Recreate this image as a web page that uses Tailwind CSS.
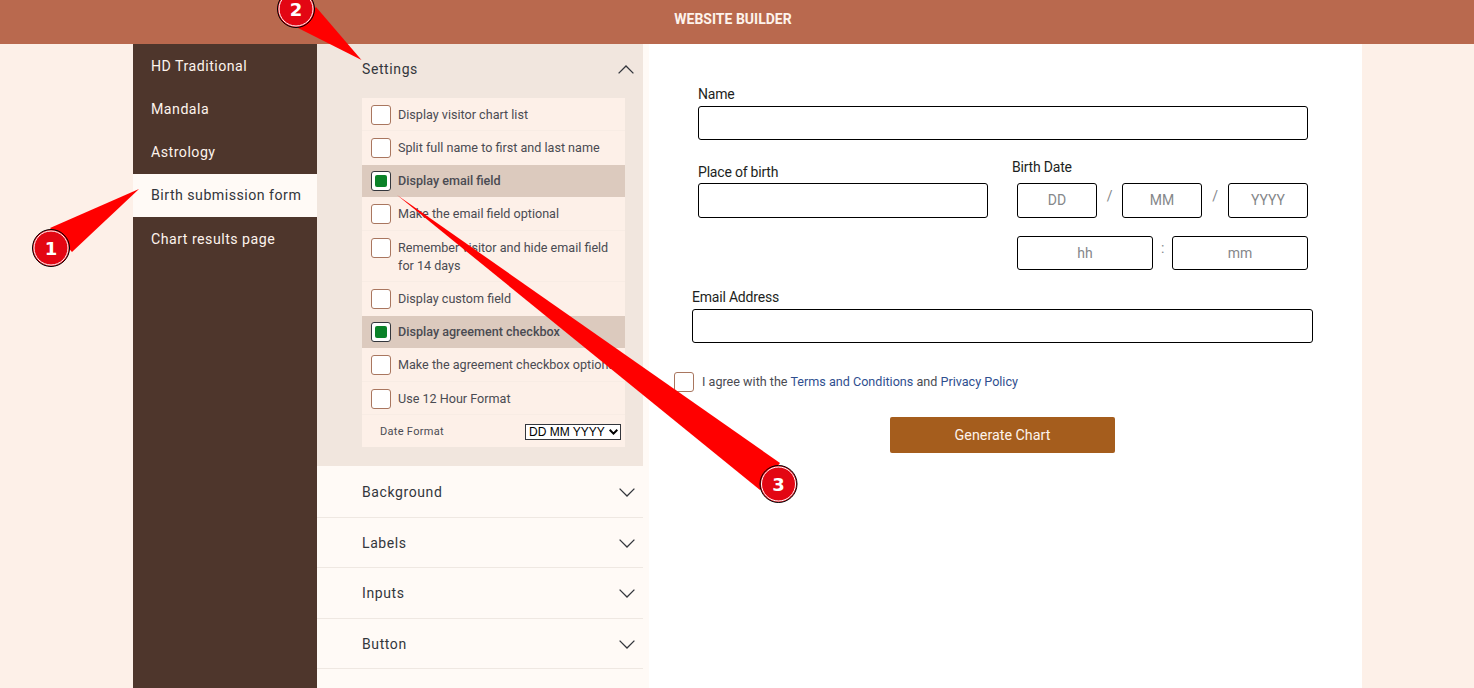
<!DOCTYPE html>
<html><head><meta charset="utf-8"><script src="https://cdn.jsdelivr.net/npm/@tailwindcss/browser@4"></script></head>
<body class="relative h-[688px] w-[1474px] overflow-hidden bg-[#fdf0e8] font-['Roboto',sans-serif] text-[#33363c]">
<header class="flex h-[44px] items-center justify-center bg-[#b9694e] pb-[6px] text-[14px] font-bold text-[#fdf3ec]"><span class="mr-[8px]">WEBSITE BUILDER</span></header>
<div class="ml-[133px] flex h-[644px] w-[1229px]">
  <nav class="flex w-[184px] shrink-0 flex-col bg-[#4e362c] text-[14.2px] font-normal tracking-[0.48px] text-[#fdf3ec]">
    <a class="flex h-[43.4px] items-center pt-[2px] pl-[18px]">HD Traditional</a>
    <a class="flex h-[43.3px] items-center pt-[1px] pl-[18px]">Mandala</a>
    <a class="flex h-[43.3px] items-center pt-[1px] pl-[18px]">Astrology</a>
    <a class="flex h-[43px] items-center pt-[1px] pl-[18px] bg-[#fffaf6] text-[#33363c]">Birth submission form</a>
    <a class="flex h-[44px] items-center pt-[1px] pl-[18px]">Chart results page</a>
  </nav>
  <aside class="w-[332px] shrink-0 bg-[#fffaf6]">
    <section class="h-[422px] w-[326px] bg-[#f1e6de] pl-[45px]">
      <div class="flex h-[54px] w-[273px] items-center justify-between pb-[4px] pr-[1px] text-[14px] tracking-[0.6px]">
        <span>Settings</span>
        <svg width="16" height="9" viewBox="0 0 16 9" fill="none" stroke="#33363c" stroke-width="1.3"><path d="M.6 8.4 8 1l7.4 7.4"/></svg>
      </div>
      <ul class="w-[263px] bg-[#fdf0e8] text-[12.6px] leading-[18px] text-[#4a4b52]">
        <li class="flex h-[33px] items-center gap-[7px] border-b border-[#f8ece4] pl-[9px] pt-[1px]"><span class="size-[20px] shrink-0 rounded-[3px] border border-[#a9765f] bg-white"></span>Display visitor chart list</li>
        <li class="flex h-[34px] items-center gap-[7px] pl-[9px]"><span class="size-[20px] shrink-0 rounded-[3px] border border-[#a9765f] bg-white"></span>Split full name to first and last name</li>
        <li class="flex h-[32px] items-center gap-[7px] bg-[#dccabe] pl-[9px] font-medium"><span class="flex size-[20px] shrink-0 items-center justify-center rounded-[3px] border border-[#33363c] bg-white"><span class="size-[12px] rounded-[2px] bg-[#0a8228]"></span></span>Display email field</li>
        <li class="flex h-[34px] items-center gap-[7px] border-b border-[#f8ece4] pl-[9px]"><span class="size-[20px] shrink-0 rounded-[3px] border border-[#a9765f] bg-white"></span>Make the email field optional</li>
        <li class="flex h-[51px] items-start gap-[7px] border-b border-[#f8ece4] pl-[9px] pt-[7px]"><span class="size-[20px] shrink-0 rounded-[3px] border border-[#a9765f] bg-white"></span><span class="mt-[1px] w-[228px]">Remember visitor and hide email field for 14 days</span></li>
        <li class="flex h-[34px] items-center gap-[7px] pl-[9px]"><span class="size-[20px] shrink-0 rounded-[3px] border border-[#a9765f] bg-white"></span>Display custom field</li>
        <li class="flex h-[32px] items-center gap-[7px] bg-[#dccabe] pl-[9px] font-medium"><span class="flex size-[20px] shrink-0 items-center justify-center rounded-[3px] border border-[#33363c] bg-white"><span class="size-[12px] rounded-[2px] bg-[#0a8228]"></span></span>Display agreement checkbox</li>
        <li class="flex h-[34px] items-center gap-[7px] whitespace-nowrap border-b border-[#f8ece4] pl-[9px] pt-[1px]"><span class="size-[20px] shrink-0 rounded-[3px] border border-[#a9765f] bg-white"></span>Make the agreement checkbox optional</li>
        <li class="flex h-[33px] items-center gap-[7px] border-b border-[#f8ece4] pl-[9px] pt-[1px]"><span class="size-[20px] shrink-0 rounded-[3px] border border-[#a9765f] bg-white"></span>Use 12 Hour Format</li>
        <li class="flex h-[32px] items-center justify-between pl-[18px] pr-[4px] pt-[1px] text-[11px] tracking-[0.3px]"><span>Date Format</span>
          <span class="relative block h-[16px] w-[96px]">
            <select class="block h-[16px] w-[96px] appearance-none border border-[#33363c] bg-white pl-[3px] font-['Liberation_Sans',sans-serif] text-[12px] leading-[14px] tracking-normal text-black"><option>DD MM YYYY</option></select>
            <svg class="absolute right-[3px] top-[5px]" width="9" height="6" viewBox="0 0 9 6" fill="none" stroke="#000" stroke-width="2"><path d="M.7.8 4.5 4.6 8.3.8"/></svg>
          </span></li>
      </ul>
    </section>
    <div class="flex h-[52px] w-[326px] items-center justify-between border-b border-[#efe8e2] pl-[45px] pr-[8px] pt-[1px] text-[14px] tracking-[0.6px]"><span>Background</span><svg width="16" height="9" viewBox="0 0 16 9" fill="none" stroke="#33363c" stroke-width="1.3"><path d="M.6.6 8 8l7.4-7.4"/></svg></div>
    <div class="flex h-[50px] w-[326px] items-center justify-between border-b border-[#efe8e2] pl-[45px] pr-[8px] pt-[1px] text-[14px] tracking-[0.6px]"><span>Labels</span><svg width="16" height="9" viewBox="0 0 16 9" fill="none" stroke="#33363c" stroke-width="1.3"><path d="M.6.6 8 8l7.4-7.4"/></svg></div>
    <div class="flex h-[51px] w-[326px] items-center justify-between border-b border-[#efe8e2] pl-[45px] pr-[8px] text-[14px] tracking-[0.6px]"><span>Inputs</span><svg width="16" height="9" viewBox="0 0 16 9" fill="none" stroke="#33363c" stroke-width="1.3"><path d="M.6.6 8 8l7.4-7.4"/></svg></div>
    <div class="flex h-[50px] w-[326px] items-center justify-between border-b border-[#efe8e2] pl-[45px] pr-[8px] pt-[1px] text-[14px] tracking-[0.6px]"><span>Button</span><svg width="16" height="9" viewBox="0 0 16 9" fill="none" stroke="#33363c" stroke-width="1.3"><path d="M.6.6 8 8l7.4-7.4"/></svg></div>
  </aside>
  <main class="flex-1 bg-white pt-[41px] text-[14px] tracking-[-0.2px] text-[#1d1f22]">
    <div class="ml-[49px] w-[610px]">
      <label class="block h-[21px] leading-[18px]">Name</label>
      <div class="h-[34px] rounded-[3px] border border-black"></div>
    </div>
    <div class="mt-[18px] ml-[49px] flex w-[610px]">
      <div class="w-[290px] pt-[5px]">
        <label class="block h-[20px] leading-[18px]">Place of birth</label>
        <div class="h-[35px] rounded-[3px] border border-black"></div>
      </div>
      <div class="ml-[24px] w-[296px]">
        <label class="block h-[25px] leading-[18px]">Birth Date</label>
        <div class="ml-[5px] flex h-[35px] items-center text-[#85878a]">
          <div class="flex h-[35px] w-[80px] items-center justify-center rounded-[3px] border border-black tracking-normal">DD</div>
          <span class="w-[25px] pb-[8px] text-center">/</span>
          <div class="flex h-[35px] w-[80px] items-center justify-center rounded-[3px] border border-black tracking-normal">MM</div>
          <span class="w-[26px] pb-[8px] text-center">/</span>
          <div class="flex h-[35px] w-[80px] items-center justify-center rounded-[3px] border border-black tracking-normal">YYYY</div>
        </div>
        <div class="ml-[5px] mt-[18px] flex h-[34px] items-center text-[#85878a]">
          <div class="flex h-[34px] w-[136px] items-center justify-center rounded-[3px] border border-black tracking-normal">hh</div>
          <span class="w-[19px] pb-[10px] text-center">:</span>
          <div class="flex h-[34px] w-[136px] items-center justify-center rounded-[3px] border border-black tracking-normal">mm</div>
        </div>
      </div>
    </div>
    <div class="mt-[18px] ml-[43px] w-[621px]">
      <label class="block h-[21px] leading-[18px]">Email Address</label>
      <div class="h-[34px] rounded-[3px] border border-black"></div>
    </div>
    <div class="mt-[29px] ml-[25px] flex h-[20px] items-center gap-[8px] text-[12.6px] tracking-normal text-[#4a4b52]">
      <span class="size-[20px] rounded-[3px] border border-[#a9765f] bg-white"></span>
      <span>I agree with the <a class="text-[#2f4f8f]">Terms and Conditions</a> and <a class="text-[#2f4f8f]">Privacy Policy</a></span>
    </div>
    <button class="mt-[25px] ml-[241px] block h-[36px] w-[225px] rounded-[2px] bg-[#a55d1d] pt-[1px] text-[14.3px] tracking-normal text-[#fdf3ec]">Generate Chart</button>
  </main>
</div>
<svg class="absolute inset-0" width="1474" height="688" viewBox="0 0 1474 688" font-family="DejaVu Sans, sans-serif" font-weight="700" font-size="18" text-anchor="middle">
  <polygon fill="#f00" points="139,189 50,228 72,252"/>
  <polygon fill="#f00" points="361.5,60 316,7 298,28"/>
  <polygon fill="#f00" points="397,195 780,463 760,490"/>
  <g><circle cx="51" cy="248" r="18.5" fill="#e30613" stroke="#000" stroke-width="1"/><circle cx="51" cy="248" r="17" fill="#e30613" stroke="#fff" stroke-width="1"/><text x="51" y="255" fill="#fff">1</text></g>
  <g><circle cx="296" cy="9" r="18.5" fill="#e30613" stroke="#000" stroke-width="1"/><circle cx="296" cy="9" r="17" fill="#e30613" stroke="#fff" stroke-width="1"/><text x="296" y="16" fill="#fff">2</text></g>
  <g><circle cx="778.5" cy="484" r="18.5" fill="#e30613" stroke="#000" stroke-width="1"/><circle cx="778.5" cy="484" r="17" fill="#e30613" stroke="#fff" stroke-width="1"/><text x="778.5" y="491" fill="#fff">3</text></g>
</svg>
</body></html>
